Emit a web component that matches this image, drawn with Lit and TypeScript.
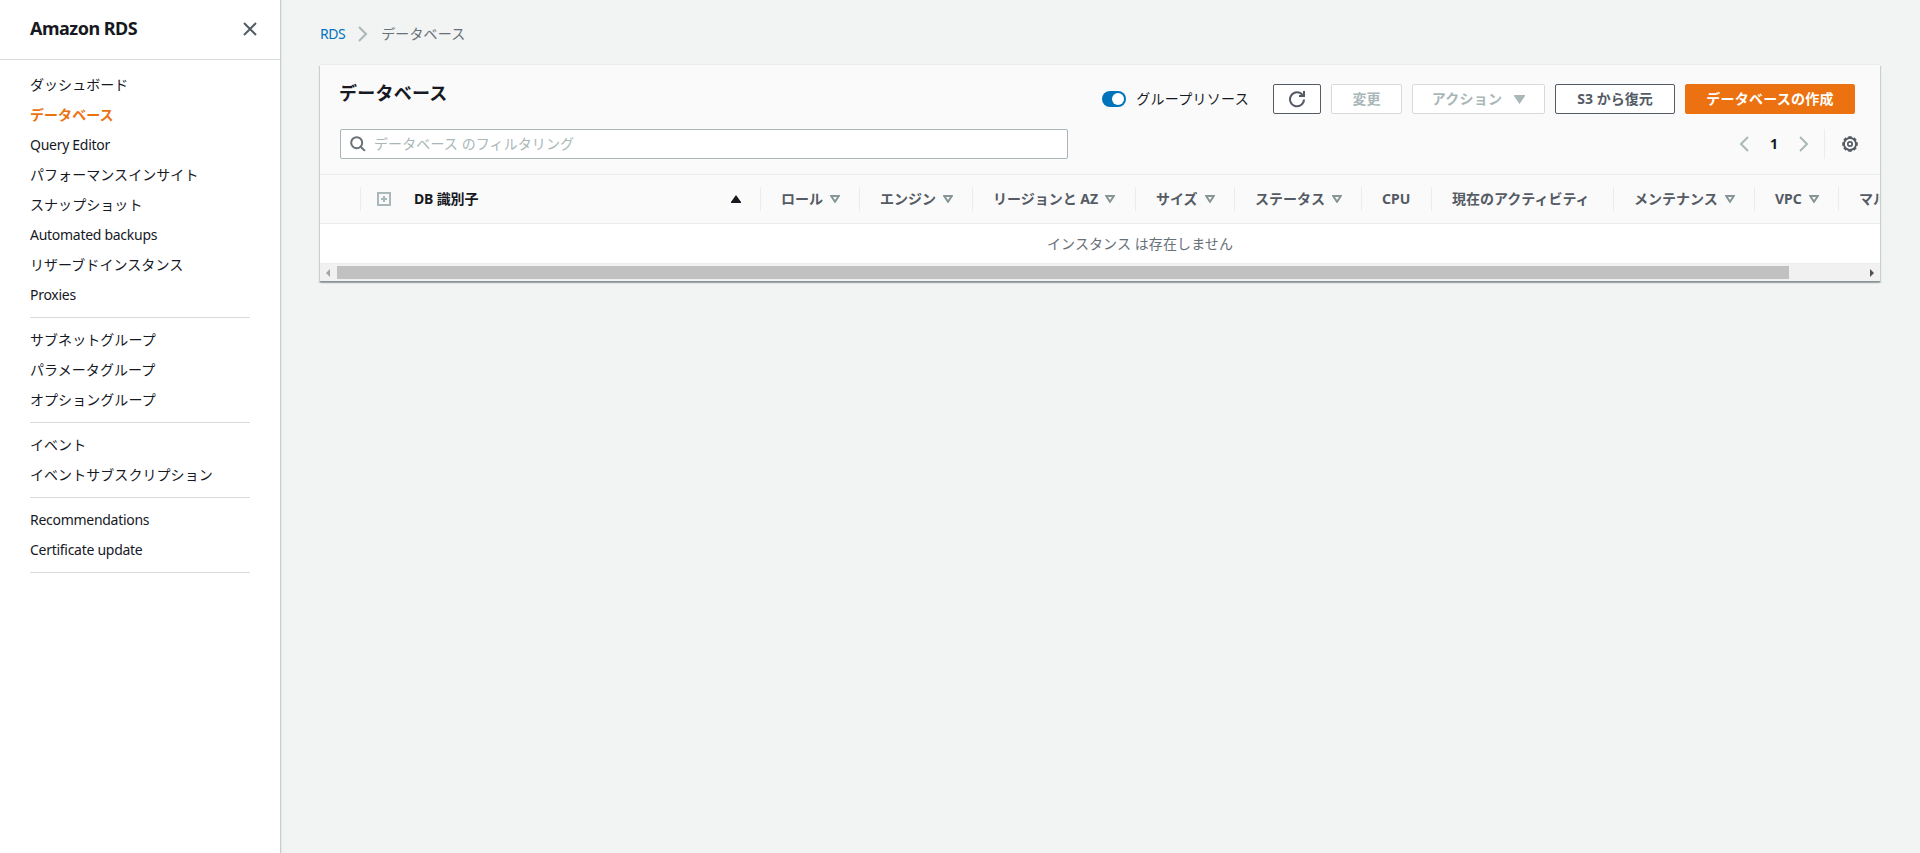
import { LitElement, html, css, svg } from "lit";
import { customElement, property } from "lit/decorators.js";
import { classMap } from "lit/directives/class-map.js";

const navGroups: string[][] = [
  ["ダッシュボード", "データベース", "Query Editor", "パフォーマンスインサイト", "スナップショット", "Automated backups", "リザーブドインスタンス", "Proxies"],
  ["サブネットグループ", "パラメータグループ", "オプショングループ"],
  ["イベント", "イベントサブスクリプション"],
  ["Recommendations", "Certificate update"],
];

interface Column {
  label: string;
  width: number;
  sort?: boolean;
}

const columns: Column[] = [
  { label: "ロール", width: 99, sort: true },
  { label: "エンジン", width: 113, sort: true },
  { label: "リージョンと AZ", width: 163, sort: true },
  { label: "サイズ", width: 99, sort: true },
  { label: "ステータス", width: 127, sort: true },
  { label: "CPU", width: 70 },
  { label: "現在のアクティビティ", width: 182 },
  { label: "メンテナンス", width: 141, sort: true },
  { label: "VPC", width: 84, sort: true },
  { label: "マルチ AZ", width: 120, sort: true },
];

const base = css`
  * { box-sizing: border-box; }
  svg { display: block; flex: none; }
`;

@customElement("rds-sidebar")
export class RdsSidebar extends LitElement {
  @property() selected = "データベース";

  static styles = [base, css`
    :host { display: block; width: 281px; flex: none; background: #fff; border-right: 1px solid #c8cece; box-shadow: 1px 0 1px rgba(0, 28, 36, .05); z-index: 1; }
    .head { display: flex; align-items: center; justify-content: space-between; height: 60px; padding: 0 22px 2px 30px; border-bottom: 1px solid #d5dbdb; }
    .title { font-size: 18px; font-weight: 700; color: #16191f; letter-spacing: -.5px; padding-bottom: 1px; }
    .nav { padding: 10px 30px 0; }
    .group { padding-bottom: 7px; margin-bottom: 7px; border-bottom: 1px solid #d5dbdb; }
    .item { display: flex; align-items: center; height: 30px; padding-bottom: 1px; white-space: nowrap; color: #16191f; letter-spacing: .06px; }
    .latin { letter-spacing: -.28px; padding-bottom: 0; }
    .active { color: #ec7211; font-weight: 700; }
  `];

  render() {
    return html`
      <div class="head">
        <span class="title">Amazon RDS</span>
        <svg width="16" height="16" viewBox="0 0 16 16" fill="none" stroke="#545b64" stroke-width="2"><path d="M2 2l12 12M14 2L2 14" /></svg>
      </div>
      <div class="nav">
        ${navGroups.map((group) => html`<div class="group">
          ${group.map((name) => html`<div class=${classMap({ item: true, active: name === this.selected, latin: /^[A-Z]/.test(name) })}>${name}</div>`)}
        </div>`)}
      </div>`;
  }
}

@customElement("database-table")
export class DatabaseTable extends LitElement {
  static styles = [base, css`
    :host { display: block; background: #fff; }
    .view { overflow: hidden; }
    .row { display: flex; align-items: center; width: 1640px; height: 50px; background: #fafafa; border-top: 1px solid #eaeded; border-bottom: 1px solid #eaeded; }
    .cell { flex: none; display: flex; align-items: center; gap: 7px; height: 24px; padding: 0 0 0 20px; border-right: 1px solid #eaeded; color: #545b64; font-weight: 700; white-space: nowrap; }
    .check { width: 41px; }
    .name { width: 400px; padding: 0 19px 0 16px; gap: 0; color: #16191f; }
    .name-text { flex: 1; padding-left: 23px; letter-spacing: -.15px; }
    .empty { display: flex; align-items: center; justify-content: center; width: 1640px; height: 40px; color: #687078; border-bottom: 1px solid #eaeded; letter-spacing: .1px; }
    .bar { display: flex; align-items: center; height: 17px; background: #f1f1f1; padding: 0 6px 0 6px; }
    .thumb { width: 1452px; height: 13px; margin-left: 7px; background: #c1c1c1; }
    .space { flex: 1; }
  `];

  render() {
    return html`
      <div class="view">
        <div class="row">
          <div class="cell check"></div>
          <div class="cell name">
            <svg width="14" height="14" viewBox="0 0 14 14" fill="none" stroke="#aab7b8" stroke-width="2"><path d="M1 1h12v12H1zM4 7h6M7 4v6" /></svg>
            <span class="name-text">DB 識別子</span>
            <svg width="10" height="8" viewBox="0 0 10 8"><path d="M5 0l5 7v1H0V7z" fill="#16191f" /></svg>
          </div>
          ${columns.map((c) => html`<div class="cell" style="width:${c.width}px">
            <span>${c.label}</span>
            ${c.sort ? html`<svg width="10" height="8" viewBox="0 0 10 8" fill="none" stroke="#879596" stroke-width="2"><path d="M1.2 1h7.6L5 6.8z" /></svg>` : ""}
          </div>`)}
        </div>
        <div class="empty">インスタンス は存在しません</div>
      </div>
      <div class="bar">
        <svg width="4" height="8" viewBox="0 0 4 8"><path d="M4 0v8L0 4z" fill="#a3a3a3" /></svg>
        <div class="thumb"></div>
        <div class="space"></div>
        <svg width="4" height="8" viewBox="0 0 4 8"><path d="M0 0v8l4-4z" fill="#505050" /></svg>
      </div>`;
  }
}

@customElement("database-panel")
export class DatabasePanel extends LitElement {
  static styles = [base, css`
    :host { display: block; width: 1560px; background: #fafafa; box-shadow: 0 1px 1px 0 rgba(0, 28, 36, .08), 1px 1px 1px 0 rgba(0, 28, 36, .15), -1px 1px 1px 0 rgba(0, 28, 36, .15), 0 -1px 0 #eaeded; border-bottom: 1px solid #879596; }
    .top { display: flex; justify-content: space-between; height: 64px; padding: 0 25px 0 19px; }
    .title { font-size: 18px; line-height: 26px; font-weight: 700; color: #16191f; padding-top: 15px; letter-spacing: .25px; }
    .actions { display: flex; align-items: center; gap: 10px; height: 30px; margin-top: 19px; }
    .toggle { display: flex; justify-content: flex-end; align-items: center; width: 24px; height: 16px; border-radius: 8px; background: #0073bb; padding: 0 2px; }
    .knob { width: 12px; height: 12px; border-radius: 50%; background: #fff; }
    .toggle-label { color: #16191f; margin-right: 14px; letter-spacing: .3px; }
    .btn { display: flex; align-items: center; justify-content: center; height: 30px; border: 1px solid #545b64; border-radius: 2px; background: #fff; color: #545b64; font-weight: 700; white-space: nowrap; }
    .refresh { width: 48px; }
    .modify { width: 71px; }
    .menu { width: 133px; gap: 12px; letter-spacing: .2px; }
    .restore { width: 120px; }
    .create { width: 170px; background: #ec7211; border-color: #ec7211; color: #fff; letter-spacing: .25px; }
    .disabled { border-color: #d5dbdb; color: #aab7b8; }
    .tools { display: flex; align-items: center; justify-content: space-between; height: 45px; padding: 0 22px 15px 20px; }
    .search { display: flex; align-items: center; gap: 8px; width: 728px; height: 30px; padding-left: 9px; background: #fff; border: 1px solid #aab7b8; border-radius: 2px; color: #aab7b8; letter-spacing: .1px; }
    .pager { display: flex; align-items: center; height: 30px; color: #16191f; font-weight: 700; }
    .page { width: 50px; text-align: center; }
    .rule { width: 1px; height: 30px; background: #eaeded; margin: 0 17px 0 15px; }
  `];

  render() {
    const teeth = Array.from({ length: 8 }, (_, i) => svg`<path d="M8 .2v2" transform="rotate(${i * 45} 8 8)" stroke-width="3.4" />`);
    return html`
      <div class="top">
        <div class="title">データベース</div>
        <div class="actions">
          <div class="toggle"><div class="knob"></div></div>
          <span class="toggle-label">グループリソース</span>
          <div class="btn refresh">
            <svg width="18" height="18" viewBox="0 0 18 18" fill="none" stroke="#545b64" stroke-width="2"><path d="M16 9.5A7 7 0 1 1 14.5 5M16 1v5h-5" /></svg>
          </div>
          <div class="btn modify disabled">変更</div>
          <div class="btn menu disabled">アクション
            <svg width="11" height="9" viewBox="0 0 11 9"><path d="M0 0h11v1L5.5 9 0 1z" fill="#aab7b8" /></svg>
          </div>
          <div class="btn restore">S3 から復元</div>
          <div class="btn create">データベースの作成</div>
        </div>
      </div>
      <div class="tools">
        <div class="search">
          <svg width="16" height="16" viewBox="0 0 16 16" fill="none" stroke="#687078" stroke-width="2"><circle cx="6.7" cy="6.7" r="5.5" /><path d="M10.7 10.7l4.2 4.2" /></svg>
          <span>データベース のフィルタリング</span>
        </div>
        <div class="pager">
          <svg width="10" height="16" viewBox="0 0 10 16" fill="none" stroke="#aab7b8" stroke-width="2"><path d="M9 1L2 8l7 7" /></svg>
          <span class="page">1</span>
          <svg width="10" height="16" viewBox="0 0 10 16" fill="none" stroke="#aab7b8" stroke-width="2"><path d="M1 1l7 7-7 7" /></svg>
          <div class="rule"></div>
          <svg width="16" height="16" viewBox="0 0 16 16" fill="none" stroke="#545b64">${teeth}<circle cx="8" cy="8" r="6" stroke-width="1.8" /><circle cx="8" cy="8" r="2.2" stroke-width="1.7" /></svg>
        </div>
      </div>
      <database-table></database-table>`;
  }
}

@customElement("app-root")
export class AppRoot extends LitElement {
  static styles = [base, css`
    :host { display: flex; height: 853px; overflow: hidden; background: #f2f3f3; font-family: "Noto Sans", "Noto Sans CJK JP", sans-serif; font-size: 14px; line-height: 22px; color: #16191f; }
    .main { flex: 1; padding: 0 0 0 39px; }
    .crumbs { display: flex; align-items: center; height: 65px; padding-top: 3px; }
    .link { color: #0073bb; letter-spacing: -.5px; }
    .sep { margin: 0 13px 0 13px; }
    .here { color: #687078; letter-spacing: .15px; }
  `];

  render() {
    return html`
      <rds-sidebar></rds-sidebar>
      <div class="main">
        <div class="crumbs">
          <span class="link">RDS</span>
          <svg class="sep" width="10" height="16" viewBox="0 0 10 16" fill="none" stroke="#aab7b8" stroke-width="2"><path d="M1 1l7 7-7 7" /></svg>
          <span class="here">データベース</span>
        </div>
        <database-panel></database-panel>
      </div>`;
  }
}
